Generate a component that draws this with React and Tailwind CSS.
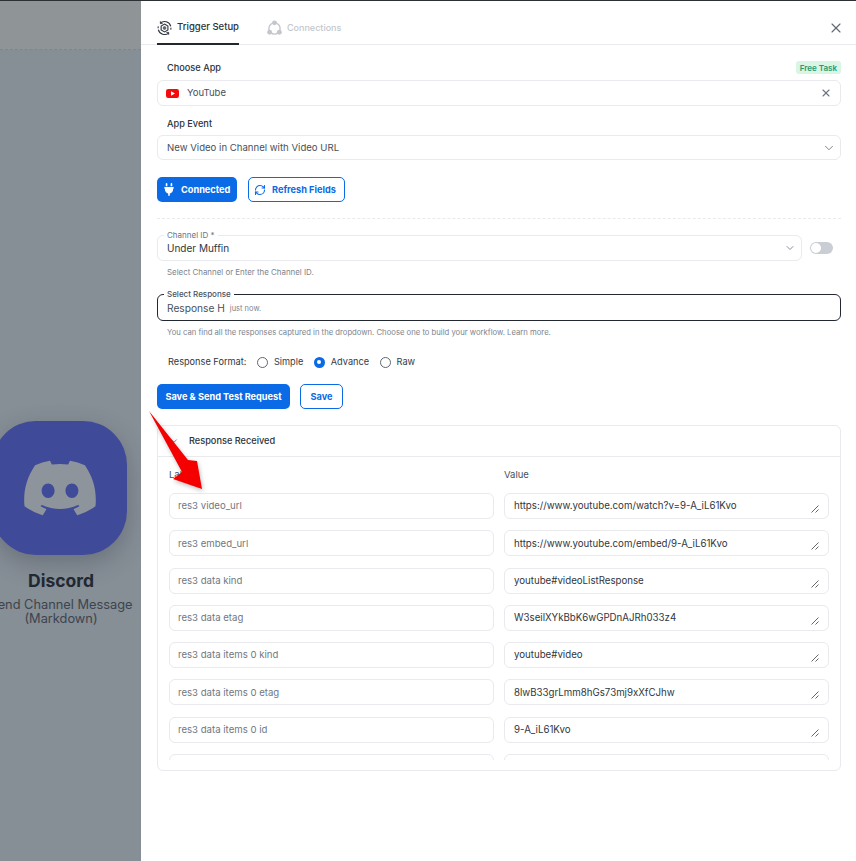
import React from 'react';
import { ChevronDown, X, RefreshCw } from 'lucide-react';
import { FaDiscord, FaPlug } from 'react-icons/fa6';

const rows = [
  { label: 'res3 video_url', value: 'https://www.youtube.com/watch?v=9-A_iL61Kvo' },
  { label: 'res3 embed_url', value: 'https://www.youtube.com/embed/9-A_iL61Kvo' },
  { label: 'res3 data kind', value: 'youtube#videoListResponse' },
  { label: 'res3 data etag', value: 'W3seilXYkBbK6wGPDnAJRh033z4' },
  { label: 'res3 data items 0 kind', value: 'youtube#video' },
  { label: 'res3 data items 0 etag', value: '8lwB33grLmm8hGs73mj9xXfCJhw' },
  { label: 'res3 data items 0 id', value: '9-A_iL61Kvo' },
  { label: '', value: '' },
];

const TriggerIcon = () => (
  <svg width="16" height="16" viewBox="0 0 16 16" fill="none" stroke="#2f3640" strokeWidth="1.2">
    <path d="M14.6 6.4A6.8 6.8 0 0 0 3.4 2.9M1.4 9.6a6.8 6.8 0 0 0 11.2 3.5" />
    <path d="M3.6 0.9v2.4h2.4M12.4 15.1v-2.4h-2.4" strokeWidth="1" />
    <path d="M1.4 6.2a6.8 6.8 0 0 0-.2 2M14.6 9.8a6.8 6.8 0 0 0 .2-2" />
    <path d="M8 3.8l3.6 2.1v4.2L8 12.2 4.4 10.1V5.9z" strokeWidth="1.2" />
    <path d="M8 6l1.8 1v2L8 10 6.2 9V7z" fill="#2f3640" stroke="none" opacity="0.75" />
  </svg>
);

const ConnectionsIcon = () => (
  <svg width="15" height="16" viewBox="0 0 16 17" fill="none" stroke="#c3c7cc" strokeWidth="1.5">
    <circle cx="8" cy="9" r="6" />
    <circle cx="8" cy="3" r="2.6" fill="#c3c7cc" stroke="none" />
    <circle cx="2.8" cy="13" r="2.6" fill="#c3c7cc" stroke="none" />
    <circle cx="13.2" cy="13" r="2.6" fill="#c3c7cc" stroke="none" />
  </svg>
);

const YoutubeIcon = () => (
  <svg width="13" height="9" viewBox="0 0 13 9">
    <rect width="13" height="9" rx="2.2" fill="#f40b0b" />
    <path d="M5 2.3v4.4L9 4.5z" fill="#fff" />
  </svg>
);

const ResizeGrip = () => (
  <svg className="absolute right-[9px] bottom-[5px]" width="8" height="8" viewBox="0 0 8 8" stroke="#555" strokeWidth="0.9">
    <path d="M0.5 7.5L7.5 0.5M4.5 7.5L7.5 4.5" />
  </svg>
);

const Radio = ({ label, checked }) => (
  <div className="flex items-center gap-[6px]">
    {checked ? (
      <span className="w-[11px] h-[11px] rounded-full bg-[#0b6ae6] flex items-center justify-center">
        <span className="w-[4px] h-[4px] rounded-full bg-white"></span>
      </span>
    ) : (
      <span className="w-[11px] h-[11px] rounded-full border border-[#5f6670] bg-white"></span>
    )}
    <span className="text-[9.2px] text-[#333b46]">{label}</span>
  </div>
);

const App = () => {
  return (
    <div
      className="relative w-[856px] h-[861px] flex overflow-hidden bg-white border-t border-[#2c2f33]"
      style={{ fontFamily: 'Inter, "Noto Sans", sans-serif' }}
    >
      {/* dimmed canvas behind the drawer */}
      <div className="w-[141px] shrink-0 flex flex-col bg-[#868e96]">
        <div className="h-[49px] bg-[#8f9496] border-b border-dashed border-[#7d858d]"></div>
        <div className="flex flex-col items-center w-[260px] ml-[-69px] pt-[371px]">
          <div className="w-[135px] h-[134px] mr-[3px] rounded-[44px] bg-[#3f4a99] flex items-center justify-center shadow-[0_8px_24px_rgba(40,45,60,0.3)]">
            <FaDiscord className="w-[78px] h-[78px] text-[#8d949c]" />
          </div>
          <div className="mt-[14px] text-[17.5px] leading-[24px] font-bold text-[#212832]">Discord</div>
          <div className="mt-[5px] text-[12.8px] leading-[14px] text-[#3d444d] text-center">
            Send Channel Message
            <br />
            (Markdown)
          </div>
        </div>
      </div>

      {/* drawer */}
      <div className="flex-1 flex flex-col bg-white">
        <div className="h-[44px] flex items-start border-b border-[#e8eaed] pl-[16px] pr-[15px]">
          <div className="h-[44px] w-[82px] flex items-center gap-[5px] border-b-2 border-[#212832] pt-[11px]">
            <TriggerIcon />
            <span className="text-[9.5px] font-medium text-[#2b323b] whitespace-nowrap">Trigger Setup</span>
          </div>
          <div className="h-[44px] flex items-center gap-[5px] ml-[28px] pt-[9px]">
            <ConnectionsIcon />
            <span className="text-[9px] font-medium text-[#c3c7cc]">Connections</span>
          </div>
          <X className="ml-auto mt-[19px] mr-[-3px] w-[16px] h-[16px] text-[#5f6873]" strokeWidth={1.7} />
        </div>

        <div className="flex flex-col pl-[16px] pr-[15px]">
          <div className="flex items-center justify-between h-[35px] pt-[10px]">
            <span className="pl-[10px] text-[9.2px] font-medium text-[#2b323b]">Choose App</span>
            <span className="px-[4px] h-[13px] flex items-center rounded-[3px] bg-[#d9f5e3] text-[8px] font-semibold text-[#1e9a76]">Free Task</span>
          </div>
          <div className="h-[26px] flex items-center rounded-[6px] border border-[#e8eaed] pl-[8px] pr-[8px]">
            <YoutubeIcon />
            <span className="ml-[8px] text-[9.5px] text-[#47505b]">YouTube</span>
            <X className="ml-auto w-[12px] h-[12px] text-[#6b7480]" strokeWidth={2.2} />
          </div>
          <div className="h-[29px] flex items-center pl-[10px] pt-[6px] text-[9.2px] font-medium text-[#2b323b]">App Event</div>
          <div className="h-[25px] flex items-center justify-between rounded-[6px] border border-[#e8eaed] pl-[9px] pr-[4px]">
            <span className="pt-[2px] text-[9.6px] text-[#47505b]">New Video in Channel with Video URL</span>
            <ChevronDown className="w-[14px] h-[14px] text-[#6b7480]" strokeWidth={1.5} />
          </div>

          <div className="flex items-center gap-[11px] mt-[17px]">
            <div className="w-[80px] h-[25px] rounded-[5px] bg-[#0b6ae6] flex items-center gap-[7px] pl-[7px] text-white">
              <FaPlug className="w-[10px] h-[13px]" />
              <span className="text-[9.2px] font-bold">Connected</span>
            </div>
            <div className="w-[97px] h-[25px] rounded-[5px] border border-[#0b6ae6] flex items-center gap-[6px] pl-[5px] text-[#0b6ae6]">
              <RefreshCw className="w-[12px] h-[12px]" strokeWidth={2.2} />
              <span className="text-[9.2px] font-bold">Refresh Fields</span>
            </div>
          </div>

          <div className="mt-[16px] border-t border-dashed border-[#e8eaed]"></div>

          <div className="flex items-center gap-[8px] mt-[16px]">
            <div className="relative flex-1 h-[26px] flex items-center justify-between rounded-[6px] border border-[#e8eaed] pl-[9px] pr-[5px]">
              <span className="absolute left-[6px] top-[-6px] bg-white px-[3px] text-[8px] leading-[10px] text-[#6b7480]">Channel ID *</span>
              <span className="text-[10px] text-[#2f3640]">Under Muffin</span>
              <ChevronDown className="w-[12px] h-[12px] text-[#6b7480]" strokeWidth={1.6} />
            </div>
            <div className="w-[23px] h-[12px] rounded-full bg-[#c9ced4] flex items-center pl-[1px] mr-[8px]">
              <span className="w-[10px] h-[10px] rounded-full bg-white"></span>
            </div>
          </div>
          <div className="pl-[10px] mt-[5px] text-[7.9px] leading-[12px] text-[#7c848e]">Select Channel or Enter the Channel ID.</div>

          <div className="relative mt-[16px] h-[27px] flex items-center gap-[5px] rounded-[6px] border border-[#212832] pl-[9px]">
            <span className="absolute left-[6px] top-[-6px] bg-white px-[3px] text-[8px] leading-[10px] font-medium text-[#4a525d]">Select Response</span>
            <span className="text-[10.2px] pt-[2px] text-[#47505b]">Response H</span>
            <span className="text-[7.5px] pt-[2px] text-[#7c848e]">just now.</span>
          </div>
          <div className="pl-[10px] mt-[6px] text-[7.7px] leading-[12px] text-[#7c848e]">
            You can find all the responses captured in the dropdown. Choose one to build your workflow. Learn more.
          </div>

          <div className="flex items-center gap-[10.5px] pl-[11px] mt-[17px] h-[12px]">
            <span className="text-[9.2px] text-[#2f3640]">Response Format:</span>
            <Radio label="Simple" />
            <Radio label="Advance" checked />
            <Radio label="Raw" />
          </div>

          <div className="flex items-center gap-[10px] mt-[16px]">
            <div className="w-[133px] h-[25px] rounded-[5px] bg-[#0b6ae6] flex items-center justify-center text-[9.2px] font-bold text-white">Save &amp; Send Test Request</div>
            <div className="w-[43px] h-[25px] rounded-[5px] border border-[#0b6ae6] flex items-center justify-center text-[9.2px] font-bold text-[#0b6ae6]">Save</div>
          </div>

          <div className="mt-[16px] h-[346px] rounded-[6px] border border-[#e8eaed] flex flex-col">
            <div className="h-[31px] shrink-0 flex items-center border-b border-[#e8eaed] pl-[11px] gap-[10px] text-[9.2px] font-medium text-[#2b323b]">
              <ChevronDown className="w-[10px] h-[10px] text-[#6b7480]" />
              Response Received
            </div>
            <div className="grid grid-cols-2 gap-x-[10px] px-[11px] pt-[11px] pb-0 text-[9.5px] text-[#47505b] h-[36px] shrink-0">
              <span>Label</span>
              <span>Value</span>
            </div>
            <div className="h-[267px] overflow-hidden px-[11px]">
              {rows.map((row, i) => (
                <div key={i} className="grid grid-cols-2 gap-x-[10px] mb-[11.3px]">
                  <div className="h-[26px] flex items-center rounded-[6px] border border-[#e8eaed] pl-[8px] pt-[1px] text-[9.6px] text-[#6f7782]">{row.label}</div>
                  <div className="relative h-[26px] flex items-center rounded-[6px] border border-[#e8eaed] pl-[9px] pt-[1px] text-[9.7px] text-[#2f3640]">
                    {row.value}
                    <ResizeGrip />
                  </div>
                </div>
              ))}
            </div>
          </div>
        </div>
      </div>

      {/* red annotation arrow */}
      <svg className="absolute left-[145px] top-[406px] drop-shadow-[1px_2px_2px_rgba(0,0,0,0.25)]" width="64" height="90" viewBox="145 407 64 90">
        <path d="M149 411L188 460L197 461L202 489L173 479L182 472z" fill="#f40000" />
      </svg>
    </div>
  );
};

export default App;
